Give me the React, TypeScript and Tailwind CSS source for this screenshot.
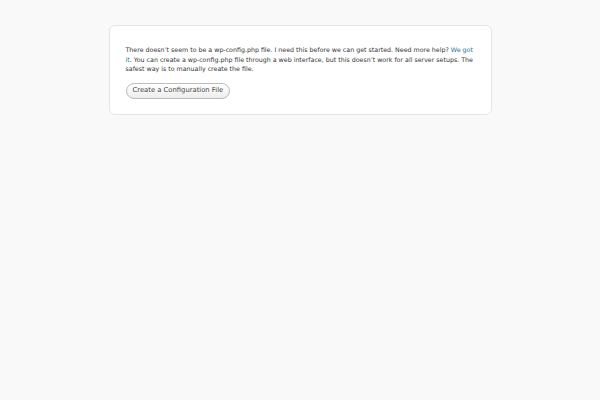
export default function App() {
  return (
    <div className="min-h-[400px] w-full bg-[#f9f9f9] pt-[25px] font-['DejaVu_Sans',sans-serif]">
      <div className="mx-auto w-[383px] rounded-[6px] border border-[#e5e5e5] bg-white px-[16px] pb-[15px] pt-[19px]">
        <p className="text-[6.3px] leading-[9.6px] text-[#333]">
          There doesn&#8217;t seem to be a wp-config.php file. I need this before we can get started. Need more help?{' '}
          <a href="#" className="text-[#21759b]">We got it</a>. You can create a wp-config.php file through a web interface,
          but this doesn&#8217;t work for all server setups. The safest way is to manually create the file.
        </p>
        <div className="mt-[9px] flex">
          <a
            href="#"
            className="flex h-[16px] items-center rounded-[8px] border border-[#bbb] bg-gradient-to-b from-white to-[#ededed] px-[6px] text-[6.8px] leading-none text-[#464646]"
          >
            Create a Configuration File
          </a>
        </div>
      </div>
    </div>
  )
}
